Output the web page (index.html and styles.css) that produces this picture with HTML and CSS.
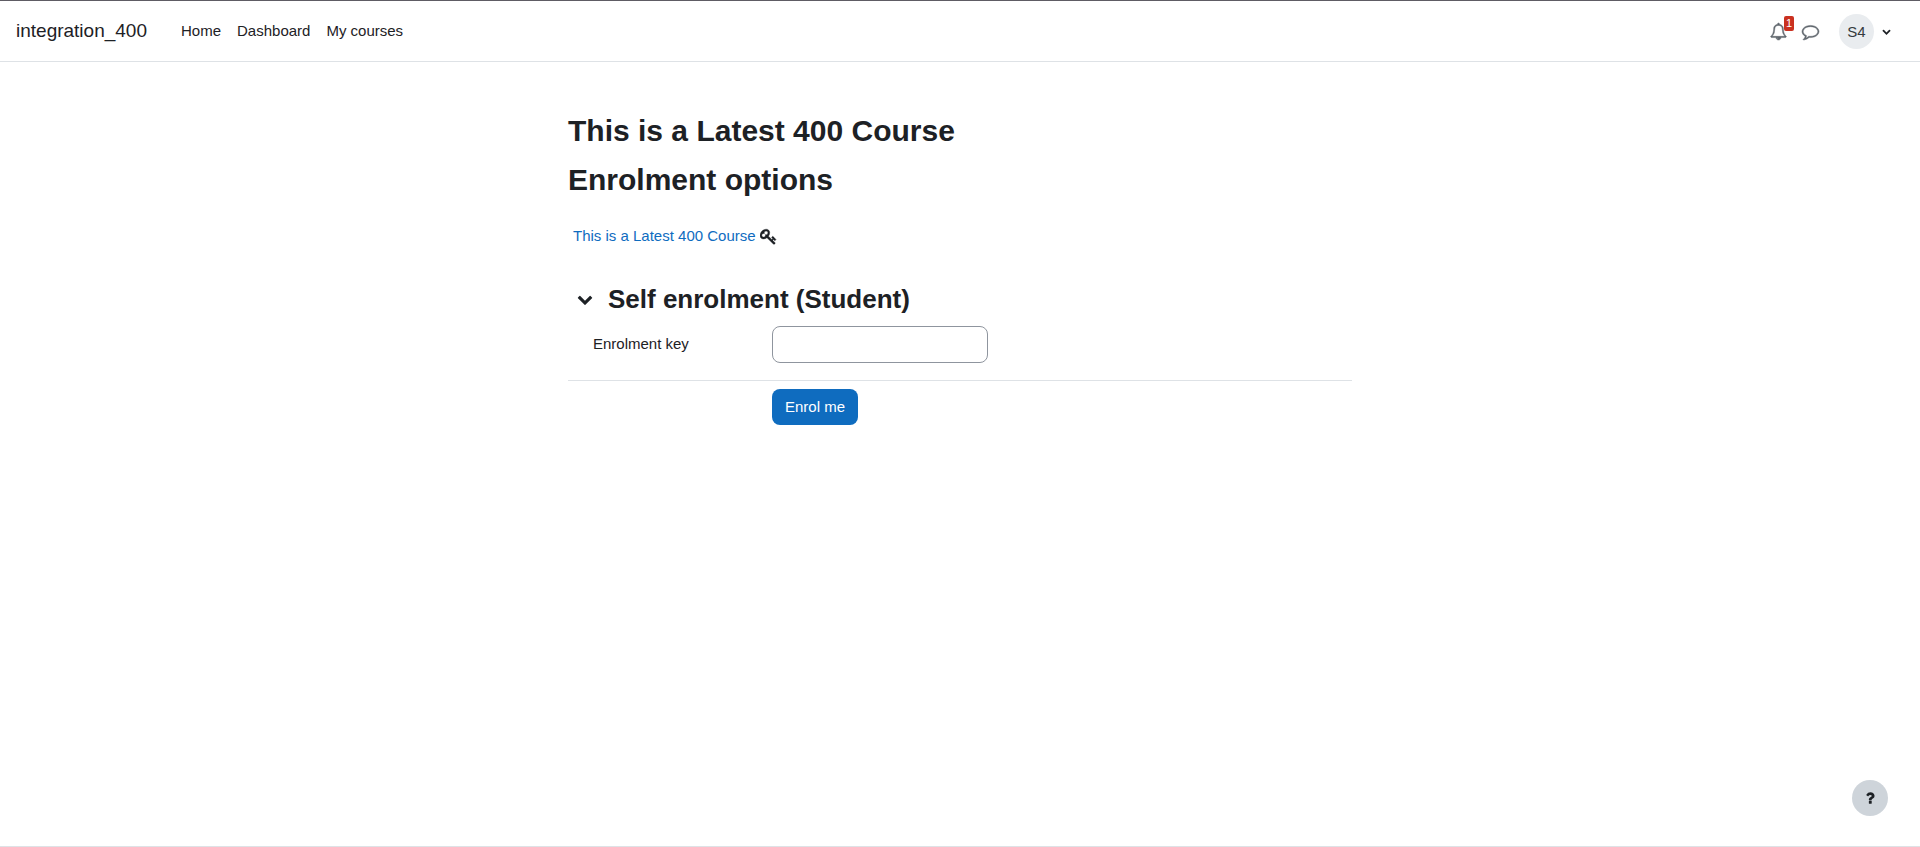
FILE: index.html
```html
<!DOCTYPE html>
<html lang="en">
<head>
    <meta charset="UTF-8">
    <meta name="viewport" content="width=device-width, initial-scale=1.0">
    <title>Enrolment options</title>
    <link rel="stylesheet" href="styles.css">
</head>
<body>

    <!-- Top navigation -->
    <header class="navbar">
        <a class="brand" href="#">integration_400</a>
        <nav class="nav-links">
            <a href="#">Home</a>
            <a href="#">Dashboard</a>
            <a href="#">My courses</a>
        </nav>
        <div class="user-nav">
            <button class="icon-btn" type="button" aria-label="Notifications">
                <svg class="icon" viewBox="0 0 1792 1792"><path d="M912 1696q0-16-16-16-59 0-101.5-42.5t-42.5-101.5q0-16-16-16t-16 16q0 73 51.5 124.5t124.5 51.5q16 0 16-16zm-666-288h1300q-266-300-266-832 0-51-24-105t-69-103-121.5-80.5-169.5-31.5-169.5 31.5-121.5 80.5-69 103-24 105q0 532-266 832zm1482 0q0 52-38 90t-90 38h-448q0 106-75 181t-181 75-181-75-75-181h-448q-52 0-90-38t-38-90q50-42 91-88t85-119.5 74.5-158.5 50-206 19.5-260q0-152 117-282.5t307-158.5q-8-19-8-39 0-40 28-68t68-28 68 28 28 68q0 20-8 39 190 28 307 158.5t117 282.5q0 139 19.5 260t50 206 74.5 158.5 85 119.5 91 88z"/></svg>
                <span class="count">1</span>
            </button>
            <button class="icon-btn" type="button" aria-label="Messages">
                <svg class="icon" viewBox="0 0 1792 1792"><path d="M896 384q-204 0-381.5 69.5t-282 187.5-104.5 255q0 112 71.5 213.5t201.5 175.5l87 50-27 96q-24 91-70 172 152-63 275-171l43-38 57 6q69 8 130 8 204 0 381.5-69.5t282-187.5 104.5-255-104.5-255-282-187.5-381.5-69.5zm896 512q0 174-120 321.5t-326 233-450 85.5q-70 0-145-8-198 175-460 242-49 14-114 22h-5q-15 0-27-10.5t-16-27.5v-1q-3-4-.5-12t2-10 4.5-9.5l6-9 7-8.5 8-9q7-8 31-34.5t34.5-38 31-39.5 32.5-51 27-59 26-76q-157-89-247.5-220t-90.5-281q0-174 120-321.5t326-233 450-85.5 450 85.5 326 233 120 321.5z"/></svg>
            </button>
            <button class="user-menu" type="button" aria-label="User menu">
                <span class="avatar">S4</span>
                <svg class="caret" viewBox="0 0 1792 1792"><path d="M1683 808l-742 741q-19 19-45 19t-45-19l-742-741q-19-19-19-45.5t19-45.5l166-165q19-19 45-19t45 19l531 531 531-531q19-19 45-19t45 19l166 165q19 19 19 45.5t-19 45.5z"/></svg>
            </button>
        </div>
    </header>

    <!-- Enrolment page -->
    <main class="content">
        <h1>This is a Latest 400 Course</h1>
        <h2>Enrolment options</h2>

        <div class="course">
            <a href="#">This is a Latest 400 Course</a>
            <svg class="icon key" viewBox="0 0 1792 1792"><path d="M832 512q0-80-56-136t-136-56-136 56-56 136q0 42 19 83-41-19-83-19-80 0-136 56t-56 136 56 136 136 56 136-56 56-136q0-42-19-83 41 19 83 19 80 0 136-56t56-136zm851 704q0 17-49 66t-66 49q-9 0-28.5-16t-36.5-33-38.5-40-24.5-26l-96 96 220 220q28 28 28 68 0 42-39 81t-81 39q-40 0-68-28l-671-671q-176 131-365 131-163 0-265.5-102.5t-102.5-265.5q0-160 95-313t248-248 313-95q163 0 265.5 102.5t102.5 265.5q0 189-131 365l355 355 96-96q-3-3-26-24.5t-40-38.5-33-36.5-16-28.5q0-17 49-66t66-49q13 0 23 10 6 6 46 44.5t82 79.5 86.5 86 73 78 28.5 41z"/></svg>
        </div>

        <form class="enrol-form">
            <div class="section-head">
                <button class="toggle" type="button" aria-label="Collapse section">
                    <svg class="icon" viewBox="0 0 1792 1792"><path d="M1683 808l-742 741q-19 19-45 19t-45-19l-742-741q-19-19-19-45.5t19-45.5l166-165q19-19 45-19t45 19l531 531 531-531q19-19 45-19t45 19l166 165q19 19 19 45.5t-19 45.5z"/></svg>
                </button>
                <h3>Self enrolment (Student)</h3>
            </div>
            <div class="form-row">
                <label for="enrolKey">Enrolment key</label>
                <input id="enrolKey" type="password">
            </div>
            <div class="form-row actions">
                <button class="submit-btn" type="button">Enrol me</button>
            </div>
        </form>
    </main>

    <footer class="footer">
        <button class="help-btn" type="button" aria-label="Help">
            <svg class="help-icon" viewBox="0 0 1792 1792"><path d="M1088 1256v240q0 16-12 28t-28 12h-240q-16 0-28-12t-12-28v-240q0-16 12-28t28-12h240q16 0 28 12t12 28zm316-600q0 54-15.5 101t-35 76.5-55 59.5-57.5 43.5-61 35.5q-41 23-68.5 65t-27.5 67q0 17-12 32.5t-28 15.5h-240q-15 0-25.5-18.5t-10.5-37.5v-45q0-83 65-156.5t143-108.5q59-27 84-56t25-76q0-42-46.5-74t-107.5-32q-65 0-108 29-35 25-107 115-13 16-31 16-12 0-25-8l-164-125q-13-10-15.5-25t5.5-28q160-266 464-266 80 0 161 31t146 83 106 127.5 41 158.5z"/></svg>
        </button>
    </footer>

</body>
</html>
```
FILE: styles.css
```css
* {
    box-sizing: border-box;
}

body {
    margin: 0;
    min-height: 100vh;
    display: flex;
    flex-direction: column;
    background-color: #fff;
    color: #1d2125;
    font-family: "Liberation Sans", Arial, sans-serif;
    font-size: 15px;
    line-height: 24px;
}

h1, h2, h3 {
    margin: 0;
    font-weight: bold;
}

h1, h2 {
    font-size: 30px;
    line-height: 36px;
}

h3 {
    font-size: 26px;
    line-height: 32px;
}

button {
    padding: 0;
    border: none;
    background: none;
    color: inherit;
    font: inherit;
    cursor: pointer;
}

.icon {
    display: block;
    width: 16px;
    height: 16px;
    fill: currentColor;
}

/* Navbar */
.navbar {
    display: flex;
    align-items: center;
    height: 62px;
    padding: 0 29px 0 16px;
    border-top: 1px solid #5e5c64;
    border-bottom: 1px solid #dee2e6;
}

.navbar a {
    color: #1d2125;
    text-decoration: none;
}

.brand {
    font-size: 19px;
}

.nav-links {
    display: flex;
    gap: 16px;
    margin-left: 34px;
}

.user-nav {
    display: flex;
    align-items: center;
    gap: 15px;
    margin-left: auto;
}

.icon-btn {
    position: relative;
    color: #5f666d;
}

.icon-btn .icon {
    width: 17px;
    height: 17px;
    overflow: visible;
    stroke: currentColor;
    stroke-width: 50;
}

.count {
    position: absolute;
    top: -7px;
    right: -7px;
    padding: 0 2px;
    border-radius: 2px;
    background-color: #ca3120;
    color: #fff;
    font-size: 11px;
    line-height: 15px;
}

.user-menu {
    display: flex;
    align-items: center;
    gap: 8px;
    margin-left: 5px;
}

.avatar {
    width: 35px;
    height: 35px;
    border-radius: 50%;
    background-color: #e9ecef;
    color: #343a40;
    line-height: 35px;
}

.caret {
    width: 9px;
    height: 9px;
    fill: currentColor;
}

/* Main content */
.content {
    flex: 1;
    width: 100%;
    max-width: 784px;
    margin: 0 auto;
    padding-top: 51px;
}

h2 {
    margin-top: 13px;
}

.course {
    display: flex;
    align-items: center;
    gap: 4px;
    margin-top: 26px;
    padding-left: 5px;
}

.course a {
    color: #0f6cbf;
    text-decoration: none;
}

.key {
    width: 17px;
    height: 17px;
    stroke: currentColor;
    stroke-width: 40;
}

.enrol-form {
    margin-top: 35px;
}

.section-head {
    display: flex;
    align-items: center;
    gap: 15px;
    padding-left: 9px;
}

.form-row {
    display: grid;
    grid-template-columns: 179px 1fr;
    align-items: center;
    padding: 11px 0 17px 25px;
}

.form-row label {
    padding-bottom: 2px;
}

.form-row input {
    width: 216px;
    height: 37px;
    padding: 6px 12px;
    border: 1px solid #8f959e;
    border-radius: 8px;
    font: inherit;
}

.actions {
    padding-top: 8px;
    border-top: 1px solid #dee2e6;
}

.submit-btn {
    grid-column: 2;
    justify-self: start;
    height: 36px;
    padding: 0 13px;
    border-radius: 8px;
    background-color: #0f6cbf;
    color: #fff;
}

/* Footer */
.footer {
    border-top: 1px solid #dee2e6;
}

.help-btn {
    position: fixed;
    right: 32px;
    bottom: 31px;
    display: flex;
    align-items: center;
    justify-content: center;
    width: 36px;
    height: 36px;
    border-radius: 50%;
    background-color: #ced4da;
}

.help-icon {
    width: 16px;
    height: 16px;
    fill: currentColor;
}
```
